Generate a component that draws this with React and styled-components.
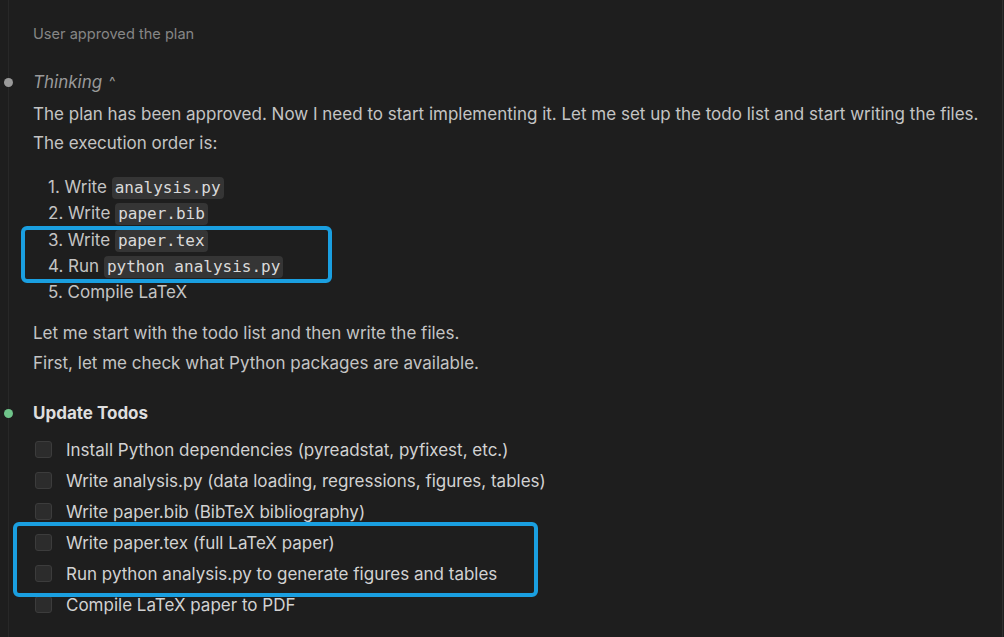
import React from "react";
import styled, { createGlobalStyle } from "styled-components";

const GlobalStyle = createGlobalStyle`
  html, body {
    margin: 0;
    padding: 0;
    background: #1e1e1e;
  }
  body {
    font-family: Inter, "Noto Sans", "Liberation Sans", sans-serif;
    -webkit-font-smoothing: antialiased;
  }
`;

const steps = [
  { n: 1, verb: "Write", code: "analysis.py" },
  { n: 2, verb: "Write", code: "paper.bib" },
  { n: 3, verb: "Write", code: "paper.tex" },
  { n: 4, verb: "Run", code: "python analysis.py" },
  { n: 5, verb: "Compile LaTeX" },
];

const todos = [
  "Install Python dependencies (pyreadstat, pyfixest, etc.)",
  "Write analysis.py (data loading, regressions, figures, tables)",
  "Write paper.bib (BibTeX bibliography)",
  "Write paper.tex (full LaTeX paper)",
  "Run python analysis.py to generate figures and tables",
  "Compile LaTeX paper to PDF",
];

const App = () => {
  return (
    <>
      <GlobalStyle />
      <PageStyled>
        <div className="timeline">
          <p className="approved">User approved the plan</p>

          <Section>
            <Dot />
            <div className="thinking">
              Thinking <span className="caret">^</span>
            </div>
            <p className="para">
              The plan has been approved. Now I need to start implementing it. Let me set up the todo list and start writing the files.
              <br />
              The execution order is:
            </p>
            <ol className="steps">
              {steps.map((s) => (
                <li key={s.n}>
                  {s.n}. {s.verb} {s.code && <Code>{s.code}</Code>}
                </li>
              ))}
            </ol>
            <p className="para para--second">
              Let me start with the todo list and then write the files.
              <br />
              First, let me check what Python packages are available.
            </p>
          </Section>

          <Section>
            <Dot $green />
            <h2 className="todos__title">Update Todos</h2>
            <ul className="todos">
              {todos.map((t) => (
                <li key={t}>
                  <Checkbox />
                  <span>{t}</span>
                </li>
              ))}
            </ul>
          </Section>
        </div>

        <Highlight style={{ left: 21, top: 226, width: 311, height: 57 }} />
        <Highlight style={{ left: 13, top: 522, width: 525, height: 75 }} />
      </PageStyled>
    </>
  );
};

const PageStyled = styled.div`
  position: relative;
  width: 1002px;
  height: 637px;
  overflow: hidden;
  border-right: 1px solid #2f2f2f;
  background: #1e1e1e;

  .timeline {
    margin-left: 8px;
    height: 100%;
    border-left: 1px solid #282828;
    padding-left: 24px;
    padding-top: 24px;
    box-sizing: border-box;
  }

  .approved {
    margin: 0;
    font-size: 14.6px;
    line-height: 20px;
    color: #868686;
  }

  .thinking {
    margin-top: 24px;
    font-size: 17px;
    line-height: 28px;
    font-style: italic;
    color: #9a9a9a;
    .caret {
      font-style: normal;
      font-size: 14px;
      margin-left: 2px;
      position: relative;
      top: -1px;
    }
  }

  .para {
    margin: 3px 0 0;
    font-size: 17px;
    line-height: 29px;
    color: #c4c4c4;
  }

  .para--second {
    margin-top: 13px;
    line-height: 30px;
  }

  .steps {
    list-style: none;
    margin: 16px 0 0;
    padding-left: 15px;
    li {
      font-size: 17px;
      line-height: 26.3px;
      color: #c4c4c4;
    }
  }

  .todos__title {
    margin: 21px 0 0;
    font-size: 17px;
    line-height: 28px;
    font-weight: 700;
    color: #dedede;
  }

  .todos {
    list-style: none;
    margin: 7px 0 0;
    padding: 0 0 0 2px;
    li {
      display: flex;
      align-items: center;
      gap: 14px;
      height: 31px;
      font-size: 17px;
      color: #d2d2d2;
    }
  }
`;

const Section = styled.div`
  position: relative;
`;

const Dot = styled.span`
  position: absolute;
  left: -29px;
  top: 10px;
  width: 9px;
  height: 9px;
  border-radius: 50%;
  background: ${(p) => (p.$green ? "#6fc48a" : "#9a9a9a")};
`;

const Code = styled.code`
  display: inline-block;
  font-family: "DejaVu Sans Mono", "Liberation Mono", monospace;
  font-size: 16px;
  line-height: 22px;
  padding: 0 3px;
  border-radius: 4px;
  background: #353535;
  color: #dadada;
`;

const Checkbox = styled.span`
  flex: none;
  width: 15px;
  height: 15px;
  border-radius: 3px;
  background: #2c2c2c;
  border: 1px solid #3c3c3c;
`;

const Highlight = styled.div`
  position: absolute;
  border: 4px solid #1a9fe0;
  border-radius: 6px;
  box-sizing: border-box;
  pointer-events: none;
`;

export default App;
